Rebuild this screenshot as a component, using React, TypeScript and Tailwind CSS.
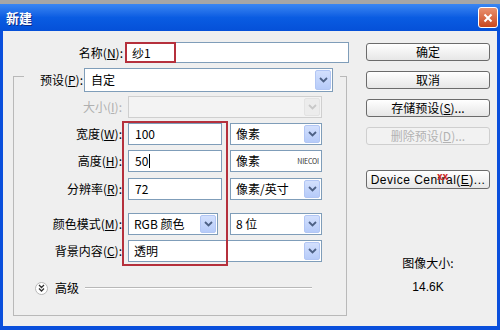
import React from 'react';

// Photoshop "新建" dialog, XP Luna style

const Mn: React.FC<{ text: string; k: string }> = ({ text, k }) => (
  <span>
    {text}(<span className="underline">{k}</span>):
  </span>
);

const Arrow: React.FC<{ disabled?: boolean }> = ({ disabled }) => (
  <span
    className={`flex h-full w-[16px] shrink-0 items-center justify-center rounded-[2px] border ${
      disabled ? 'border-[#e3e3e3] bg-[#ececec]' : 'border-[#b2c6f4] bg-gradient-to-b from-[#d3e0fd] to-[#b6cbf9]'
    }`}
  >
    <svg width="9" height="6" viewBox="0 0 9 6">
      <path d="M1 1l3.5 3.5L8 1" stroke={disabled ? '#c8c8c8' : '#4d6185'} strokeWidth="1.8" fill="none" />
    </svg>
  </span>
);

const Select: React.FC<{ value?: string; w: string; disabled?: boolean; noArrow?: boolean }> = ({
  value,
  w,
  disabled,
  noArrow,
}) => (
  <div
    className={`flex h-[22px] ${w} items-center border p-[1px] pl-[5px] leading-[16px] ${
      disabled ? 'border-[#cfcfcf] bg-[#f3f3f3]' : 'border-[#7f9db9] bg-white'
    }`}
  >
    <span className="flex-1 whitespace-nowrap">{value}</span>
    {noArrow ? (
      <span className="pr-[1px] text-[7px] leading-[10px] tracking-tight text-[#333]">NIECOI</span>
    ) : (
      <Arrow disabled={disabled} />
    )}
  </div>
);

const Input: React.FC<{ value: string; caret?: boolean }> = ({ value, caret }) => (
  <div className="flex h-[22px] w-[94px] items-center border border-[#7f9db9] bg-white pl-[6px] leading-[16px]">
    {value}
    {caret && <span className="ml-[1px] h-[14px] w-[1px] bg-black" />}
  </div>
);

const Btn: React.FC<{ children: React.ReactNode; disabled?: boolean; h?: string; mt: string }> = ({
  children,
  disabled,
  h = 'h-[18px]',
  mt,
}) => (
  <div
    className={`${mt} flex ${h} w-[124px] items-center justify-center rounded-[3px] border leading-[16px] ${
      disabled
        ? 'border-[#cfcfcf] bg-[#f2f2f2] text-[#b2b2b2]'
        : 'border-[#6b6b6b] bg-gradient-to-b from-white to-[#e6e6e6] text-black'
    }`}
  >
    {children}
  </div>
);

const Row: React.FC<{ label: React.ReactNode; mt: string; children: React.ReactNode; disabled?: boolean }> = ({
  label,
  mt,
  children,
  disabled,
}) => (
  <div className={`${mt} flex h-[22px] items-center`}>
    <div className={`w-[110px] pr-[2px] text-right leading-[16px] ${disabled ? 'text-[#b0b0b0]' : ''}`}>{label}</div>
    <div className="ml-[4px] flex items-center">{children}</div>
  </div>
);

export default function App() {
  return (
    <div className="flex h-[330px] w-[500px] flex-col overflow-hidden bg-[#a6a6a6] font-['Noto_Sans_CJK_SC','Liberation_Sans',sans-serif] text-[12px] leading-none text-black">
      {/* title bar */}
      <div className="mt-[4px] flex h-[27px] items-center bg-gradient-to-b from-[#3a86f2] via-[#0a5ce2] to-[#0550d8] pl-[6px] pr-[2px]">
        <span className="text-[13px] font-bold leading-[18px] text-white [text-shadow:1px_1px_0_#0a2a8a]">新建</span>
        <div className="ml-auto flex h-[21px] w-[20px] items-center justify-center rounded-[3px] border border-white bg-gradient-to-b from-[#e9906e] to-[#c8461c]">
          <svg width="10" height="10" viewBox="0 0 10 10">
            <path d="M1.5 1.5l7 7M8.5 1.5l-7 7" stroke="white" strokeWidth="2" />
          </svg>
        </div>
      </div>

      {/* body */}
      <div className="flex flex-1 border-x-[3px] border-b-[4px] border-[#0a4fdc] bg-[#efefef] pt-[11px]">
        {/* left column */}
        <div className="flex w-[346px] flex-col">
          <div className="flex h-[21px] items-center leading-[16px]">
            <div className="w-[122px] pr-[2px] text-right">
              <Mn text="名称" k="N" />
            </div>
            <div className="relative flex h-[21px] w-[224px] items-center border border-[#7f9db9] bg-white pl-[6px]">
              纱1
              <div className="absolute left-[-1px] top-[-1px] h-[21px] w-[51px] border-2 border-[#b5303c]" />
            </div>
          </div>

          {/* group box */}
          <div className="relative ml-[10px] mt-[13px] h-[240px] w-[334px] border border-[#b9b9b9]">
            <div className="-mt-[9px] ml-[10px] flex h-[24px] w-fit items-center bg-[#efefef] pl-[9px] pr-[7px] leading-[16px]">
              <div className="w-[50px] text-right">
                <Mn text="预设" k="P" />
              </div>
              <div className="ml-[1px] flex h-[24px] w-[249px] items-center border border-[#7f9db9] bg-white p-[1px] pl-[6px]">
                <span className="flex-1">自定</span>
                <Arrow />
              </div>
            </div>

            <Row mt="mt-[4px]" label={<Mn text="大小" k="I" />} disabled>
              <Select w="w-[194px]" disabled />
            </Row>
            <Row mt="mt-[5px]" label={<Mn text="宽度" k="W" />}>
              <Input value="100" />
              <div className="ml-[8px]">
                <Select value="像素" w="w-[92px]" />
              </div>
            </Row>
            <Row mt="mt-[5px]" label={<Mn text="高度" k="H" />}>
              <Input value="50" caret />
              <div className="ml-[8px]">
                <Select value="像素" w="w-[92px]" noArrow />
              </div>
            </Row>
            <Row mt="mt-[6px]" label={<Mn text="分辨率" k="R" />}>
              <Input value="72" />
              <div className="ml-[8px]">
                <Select value="像素/英寸" w="w-[92px]" />
              </div>
            </Row>
            <Row mt="mt-[13px]" label={<Mn text="颜色模式" k="M" />}>
              <Select value="RGB 颜色" w="w-[90px]" />
              <div className="ml-[12px]">
                <Select value="8 位" w="w-[92px]" />
              </div>
            </Row>
            <Row mt="mt-[5px]" label={<Mn text="背景内容" k="C" />}>
              <Select value="透明" w="w-[194px]" />
            </Row>

            <div className="mt-[19px] flex h-[14px] items-center leading-[16px]">
              <div className="ml-[21px] flex h-[13px] w-[13px] items-center justify-center rounded-full border border-[#b8b8b8] bg-white">
                <svg width="7" height="8" viewBox="0 0 7 8">
                  <path d="M1 1l2.5 2.5L6 1M1 4.5l2.5 2.5L6 4.5" stroke="#333" strokeWidth="1.3" fill="none" />
                </svg>
              </div>
              <span className="ml-[7px]">高级</span>
              <div className="ml-[6px] mr-[34px] h-[2px] flex-1 border-t border-b border-t-[#b8b8b8] border-b-white" />
            </div>

            {/* highlight box drawn over the fields */}
            <div className="absolute left-[108px] top-[44px] h-[145px] w-[106px] border-2 border-[#b5303c]" />
          </div>
        </div>

        {/* right column */}
        <div className="relative ml-[17px] flex w-[124px] flex-col items-center">
          <Btn mt="mt-[1px]">确定</Btn>
          <Btn mt="mt-[10px]">取消</Btn>
          <Btn mt="mt-[10px]">
            存储预设(<span className="underline">S</span>)...
          </Btn>
          <Btn mt="mt-[10px]" disabled>
            删除预设(<span className="underline">D</span>)...
          </Btn>
          <Btn mt="mt-[25px]" h="h-[19px]">
            <span className="font-['Liberation_Sans',sans-serif] tracking-[0.5px]">
              Device Central(<span className="underline">E</span>)...
            </span>
          </Btn>
          <span className="absolute left-[71px] top-[129px] text-[10px] font-bold leading-none text-[#d02828]">xx</span>
          <div className="mt-[66px] leading-[16px]">图像大小:</div>
          <div className="mt-[8px] font-['Liberation_Sans',sans-serif] leading-[16px]">14.6K</div>
        </div>
      </div>
    </div>
  );
}
